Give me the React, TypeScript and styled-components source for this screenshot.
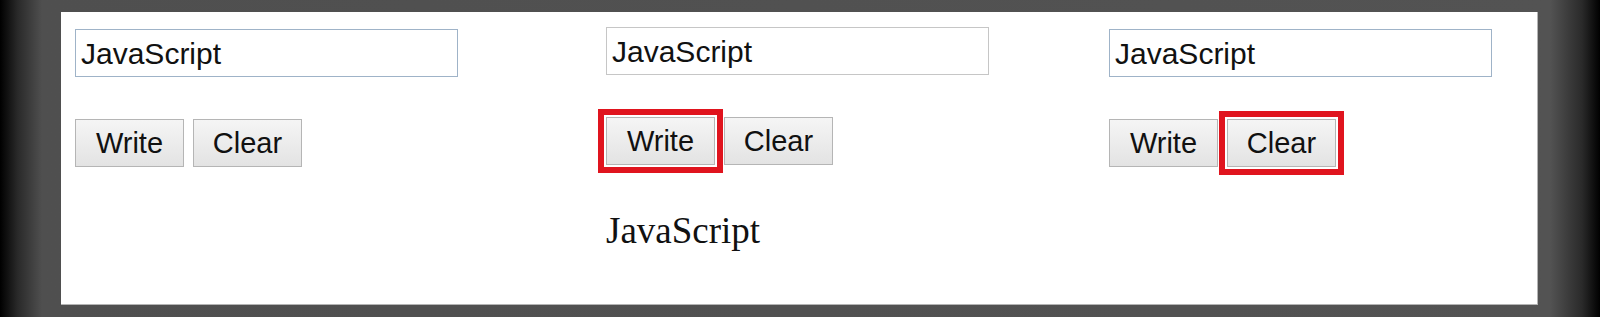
import React from "react";
import styled, { createGlobalStyle } from "styled-components";

const Global = createGlobalStyle`
  html, body {
    margin: 0;
    padding: 0;
    height: 317px;
    overflow: hidden;
  }
  body {
    background: linear-gradient(
      to right,
      #000 0,
      #2a2a2a 18px,
      #4f4f4f 42px,
      #535353 1550px,
      #2a2a2a 1582px,
      #000 1600px
    );
  }
`;

type ColumnData = {
  lift: number;
  width: number;
  muted: boolean;
  marked: "write" | "clear" | null;
  output: string | null;
};

const columns: ColumnData[] = [
  { lift: 0, width: 531, muted: false, marked: null, output: null },
  { lift: 2, width: 503, muted: true, marked: "write", output: "JavaScript" },
  { lift: 0, width: 429, muted: false, marked: "clear", output: null },
];

export default function App() {
  return (
    <>
      <Global />
      <Panel>
        {columns.map((c, i) => (
          <Column key={i} $width={c.width} $lift={c.lift}>
            <TextField $muted={c.muted} defaultValue="JavaScript" />
            <ButtonRow>
              <Button $marked={c.marked === "write"}>Write</Button>
              <Button $marked={c.marked === "clear"}>Clear</Button>
            </ButtonRow>
            {c.output && <Output>{c.output}</Output>}
          </Column>
        ))}
      </Panel>
    </>
  );
}

const Panel = styled.div`
  box-sizing: border-box;
  margin: 12px 62px 0 61px;
  height: 293px;
  background: #fff;
  border-right: 1px solid #b4b4b4;
  border-bottom: 1px solid #b4b4b4;
  padding: 17px 0 0 14px;
  display: flex;
  align-items: flex-start;
`;

const Column = styled.div<{ $width: number; $lift: number }>`
  width: ${p => p.$width}px;
  flex: none;
  display: flex;
  flex-direction: column;
  margin-top: ${p => -p.$lift}px;
`;

const TextField = styled.input<{ $muted: boolean }>`
  box-sizing: border-box;
  width: 383px;
  height: 48px;
  margin: 0;
  padding: 2px 5px 0;
  border: 1px solid ${p => (p.$muted ? "#c6c6c6" : "#9fb3c8")};
  background: #fff;
  font-family: "Liberation Sans", Arial, sans-serif;
  font-size: 30px;
  color: #111;
  outline: none;
`;

const ButtonRow = styled.div`
  display: flex;
  gap: 9px;
  margin-top: 42px;
`;

const Button = styled.button<{ $marked: boolean }>`
  box-sizing: border-box;
  width: 109px;
  height: 48px;
  margin: 0;
  padding: 0;
  border: 1px solid #b5b5b5;
  border-radius: 0;
  background: linear-gradient(to bottom, #f5f5f5, #e3e3e3);
  font-family: "Liberation Sans", Arial, sans-serif;
  font-size: 29px;
  color: #111;
  outline: ${p => (p.$marked ? "6px solid #e0141e" : "none")};
  outline-offset: 2px;
`;

const Output = styled.div`
  margin-top: 44px;
  font-family: "Liberation Serif", "Times New Roman", serif;
  font-size: 37px;
  color: #111;
`;
